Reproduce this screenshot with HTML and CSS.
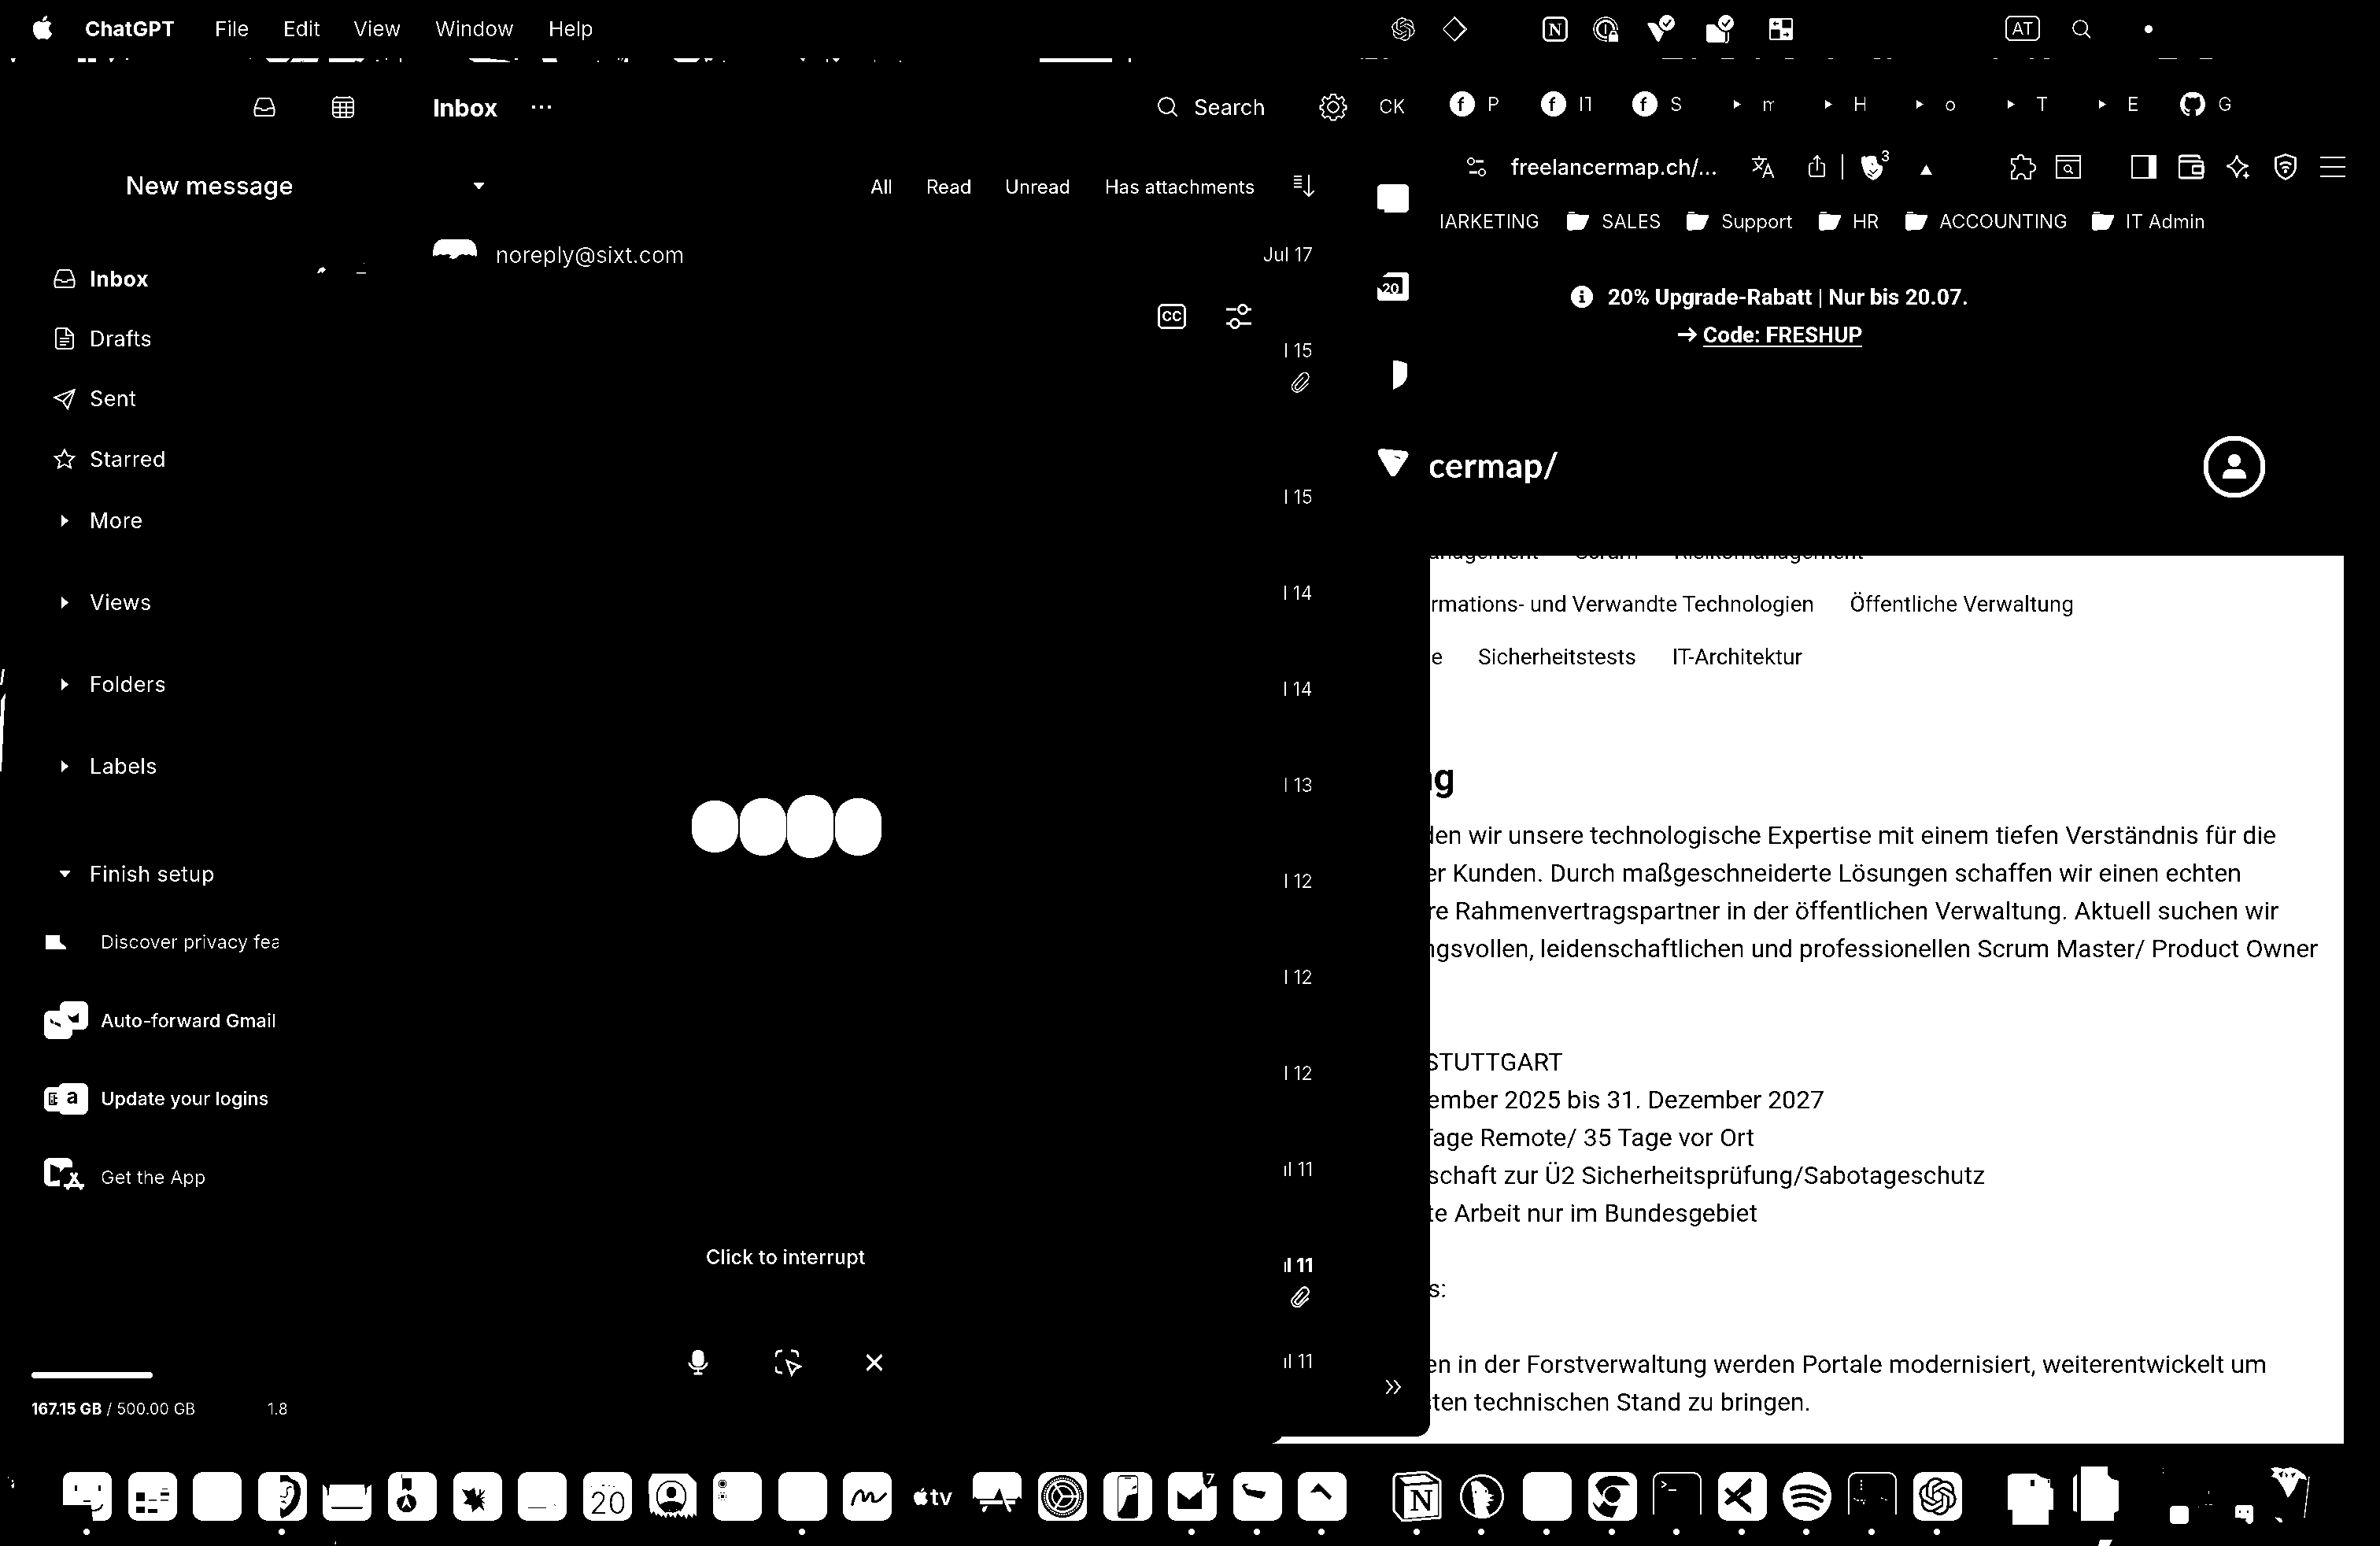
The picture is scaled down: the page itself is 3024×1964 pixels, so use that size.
FILE: index.html
```html
<!DOCTYPE html>
<html lang="en">
<head>
<meta charset="utf-8">
<title>Desktop</title>
<link rel="stylesheet" href="styles.css">
</head>
<body>
<svg class="defs" width="0" height="0">
  <symbol id="openai" viewBox="0 0 24 24"><path d="M22.2819 9.8211a5.9847 5.9847 0 0 0-.5157-4.9108 6.0462 6.0462 0 0 0-6.5098-2.9A6.0651 6.0651 0 0 0 4.9807 4.1818a5.9847 5.9847 0 0 0-3.9977 2.9 6.0462 6.0462 0 0 0 .7427 7.0966 5.98 5.98 0 0 0 .511 4.9107 6.051 6.051 0 0 0 6.5146 2.9001A5.9847 5.9847 0 0 0 13.2599 24a6.0557 6.0557 0 0 0 5.7718-4.2058 5.9894 5.9894 0 0 0 3.9977-2.9001 6.0557 6.0557 0 0 0-.7475-7.0729zm-9.022 12.6081a4.4755 4.4755 0 0 1-2.8764-1.0408l.1419-.0804 4.7783-2.7582a.7948.7948 0 0 0 .3927-.6813v-6.7369l2.02 1.1686a.071.071 0 0 1 .038.052v5.5826a4.504 4.504 0 0 1-4.4945 4.4944zm-9.6607-4.1254a4.4708 4.4708 0 0 1-.5346-3.0137l.142.0852 4.783 2.7582a.7712.7712 0 0 0 .7806 0l5.8428-3.3685v2.3324a.0804.0804 0 0 1-.0332.0615L9.74 19.9502a4.4992 4.4992 0 0 1-6.1408-1.6464zM2.3408 7.8956a4.485 4.485 0 0 1 2.3655-1.9728V11.6a.7664.7664 0 0 0 .3879.6765l5.8144 3.3543-2.0201 1.1685a.0757.0757 0 0 1-.071 0l-4.8303-2.7865A4.504 4.504 0 0 1 2.3408 7.872zm16.5963 3.8558L13.1038 8.364 15.1192 7.2a.0757.0757 0 0 1 .071 0l4.8303 2.7913a4.4944 4.4944 0 0 1-.6765 8.1042v-5.6772a.79.79 0 0 0-.407-.667zm2.0107-3.0231l-.142-.0852-4.7735-2.7818a.7759.7759 0 0 0-.7854 0L9.409 9.2297V6.8974a.0662.0662 0 0 1 .0284-.0615l4.8303-2.7866a4.4992 4.4992 0 0 1 6.6802 4.66zM8.3065 12.863l-2.02-1.1638a.0804.0804 0 0 1-.038-.0567V6.0742a4.4992 4.4992 0 0 1 7.3757-3.4537l-.142.0805L8.704 5.459a.7948.7948 0 0 0-.3927.6813zm1.0976-2.3654l2.602-1.4998 2.6069 1.4998v2.9994l-2.5974 1.4997-2.6067-1.4997Z"/></symbol>
  <symbol id="apple" viewBox="0 0 24 24"><path d="M12.152 6.896c-.948 0-2.415-1.078-3.96-1.04-2.04.027-3.91 1.183-4.961 3.014-2.117 3.675-.546 9.103 1.519 12.09 1.013 1.454 2.208 3.09 3.792 3.039 1.52-.065 2.09-.987 3.935-.987 1.831 0 2.35.987 3.96.948 1.637-.026 2.676-1.48 3.676-2.948 1.156-1.688 1.636-3.325 1.662-3.415-.039-.013-3.182-1.221-3.22-4.857-.026-3.04 2.48-4.494 2.597-4.559-1.429-2.09-3.623-2.324-4.39-2.376-2-.156-3.675 1.09-4.61 1.09zM15.53 3.83c.843-1.012 1.4-2.427 1.245-3.83-1.207.052-2.662.805-3.532 1.818-.78.896-1.454 2.338-1.273 3.714 1.338.104 2.715-.688 3.559-1.701"/></symbol>
  <symbol id="inbox" viewBox="0 0 28 24"><path class="ln" d="M1.500 13.500 6 2.200Q6.500 1.200 7.600 1.200H20.400Q21.500 1.200 22 2.200L26.500 13.500V20.500Q26.500 22.800 24.200 22.800H3.800Q1.500 22.800 1.500 20.500ZM1.500 13.500H8.500Q10 13.500 10.500 15 11 16.500 14 16.500T17.500 15Q18 13.500 19.500 13.500H26.500"/></symbol>
  <symbol id="clip" viewBox="0 0 28 30"><path d="M25.500 16.500 15.500 26A7 7 0 0 1 4.500 17.500L16 4.500A5.400 5.400 0 0 1 24.500 11.500L13.500 23.500A3 3 0 0 1 8.500 19.500L18.500 8.500"/></symbol>
  <symbol id="caret" viewBox="0 0 8 12" preserveAspectRatio="none"><path d="M0 0 8 6 0 12Z"/></symbol>
  <symbol id="folder" viewBox="0 0 29 24"><path d="M2 0H10V2H2ZM0 5Q0 3 2 3H14L15 4H28V7L22 20Q20 24 14 22.500L4 24Q0 24 0 20Z"/></symbol>
  <symbol id="glass" viewBox="0 0 26 26"><circle class="ln" cx="11" cy="11" r="9.800"/><path class="ln" d="M18 18 25 25"/></symbol>
  <symbol id="fmap" viewBox="0 0 32 32"><circle cx="16" cy="16" r="16"/><path class="bk" d="M12 25V15H10V13H12Q12 7 18 7V10Q15 10 15 13H18V15H15V25Z"/></symbol>
  <symbol id="tune" viewBox="0 0 32 32"><path class="ln3" d="M0 7H13M27 7H32M0 25H5M18 25H32"/><circle class="ln3" cx="21" cy="7" r="5.500"/><circle class="ln3" cx="11" cy="25" r="5.500"/></symbol>
  <symbol id="check" viewBox="0 0 20 20"><circle cx="10" cy="10" r="10"/><path d="M5 10 9 14 15 6" fill="none" stroke="#000" stroke-width="2.600"/></symbol>
</svg>
<div class="desktop">
  <header class="menubar">
    <svg class="apple"><use href="#apple"/></svg><b>ChatGPT</b><span>File</span><span>Edit</span><span>View</span><span>Window</span><span>Help</span>
    <svg class="i30 dim"><use href="#openai"/></svg>
    <svg class="i32" viewBox="0 0 32 32"><path class="ln1" d="M16 1 2 16 16 31 32 16ZM16 1 29 16 16 31"/></svg>
    <svg class="i32" viewBox="0 0 32 32"><rect class="ln3" x="1.500" y="1.500" width="29" height="29" rx="6"/><text class="serif" x="16" y="24" font-size="23" text-anchor="middle">N</text></svg>
    <svg class="i32" viewBox="0 0 32 32"><circle class="ln1" cx="16" cy="16" r="15"/><circle class="ln3" cx="16" cy="16" r="10.500"/><path class="ln3" d="M16 10V22"/><path class="bk" d="M18 17H32V32H18Z"/><rect x="20" y="23" width="12" height="9" rx="1"/><path class="ln" d="M22.500 23V21Q22.500 19 26 19T29.500 21V23"/></svg>
    <svg class="i36" viewBox="0 0 36 36"><path d="M0 11Q7 7 13 13L20 18 14 33Q12 33 11 31Z"/><path class="ln" d="M14 34 21 20"/><circle class="bk" cx="25" cy="10" r="12"/><use href="#check" x="15" y="0" width="20" height="20"/></svg>
    <svg class="i36" viewBox="0 0 36 36"><path d="M0 14Q0 12 2 12H10L14 16H24V33Q24 35 22 35H4Q0 35 0 31Z"/><path class="ln" d="M24 35Q28 35 28 31V22"/><circle class="bk" cx="25" cy="10" r="12"/><use href="#check" x="15" y="0" width="20" height="20"/></svg>
    <svg class="i30" viewBox="0 0 30 30"><path d="M3 1H27Q30 1 30 4V26Q30 29 27 29H3Q0 29 0 26V4Q0 1 3 1Z"/><path class="bk" d="M16.500 3H28V13.500H16.500ZM2 15.500H13.500V27H2ZM4 8 8 4.500V7H12V9H8V11.500ZM26 22 22 18.500V21H18V23H22V25.500Z"/></svg>
    <span class="lang">AT</span>
    <svg class="i24"><use href="#glass"/></svg>
    <i class="recdot"></i>
  </header>
  <svg class="strip" viewBox="0 0 3024 6"><path d="M14 0H20L18 5H15ZM99 0H109V5H99ZM112 0H122V5H112ZM139 0H145L142 5H140ZM160 0H163V2H160ZM317 0H319V1H317ZM337 0H368L364 5H343ZM372 0H405L403 5H383L390 2 380 5H369ZM418 0H463L458 5 452 3 450 5H418ZM478 2H481V4H478ZM490 0H492V2H490ZM508 0H510V5H508ZM595 0H622L628 3 622 1 640 2 650 5H603ZM654 0H658V2H654ZM689 0H707L708 5H690ZM759 3H761V5H759ZM785 0H787V2H785ZM790 0 792 0 789 4ZM794 0H798V5H793ZM855 0H889L885 5H862ZM895 0H906L903 3 900 2 897 5ZM919 3H921V5H919ZM1016 0H1023L1021 4ZM1050 1H1052V5H1050ZM1058 0H1067L1062 5ZM1111 2H1112V5H1111ZM1143 3H1145V5H1143ZM1321 0H1413V5H1321ZM1434 0H1437V5H1434ZM1729 0H1732V1H1729ZM1735 0H1750V1H1735ZM1758 0H1763V1H1758ZM2112 0H2138V1H2112ZM2150 0H2155V1H2150ZM2187 0H2203V1H2187ZM2231 0H2236V1H2231ZM2268 0H2279V1H2268ZM2323 0H2329V1H2323ZM2381 0H2389V1H2381ZM2398 0H2403V1H2398ZM2533 0H2538V1H2533ZM2579 0H2584V1H2579ZM2597 0H2604V1H2597ZM2743 0H2766V1H2743ZM2795 0H2811V1H2795Z"/></svg>

  <main class="stage">
    <section class="browser">
      <div class="tabs">
        <svg class="i32"><use href="#fmap"/></svg><span>P</span><svg class="i32"><use href="#fmap"/></svg><span>IT</span><svg class="i32"><use href="#fmap"/></svg><span>S</span>
        <svg class="play"><use href="#caret"/></svg><span>m</span><svg class="play"><use href="#caret"/></svg><span>H</span><svg class="play"><use href="#caret"/></svg><span>o</span><svg class="play"><use href="#caret"/></svg><span>T</span><svg class="play"><use href="#caret"/></svg><span>E</span>
        <svg class="i32" viewBox="0 0 24 24"><path d="M12 .297c-6.630 0-12 5.373-12 12 0 5.303 3.438 9.800 8.205 11.385.6.113.82-.258.82-.577 0-.285-.01-1.040-.015-2.040-3.338.724-4.042-1.610-4.042-1.610C4.422 18.070 3.633 17.700 3.633 17.700c-1.087-.744.084-.729.084-.729 1.205.084 1.838 1.236 1.838 1.236 1.070 1.835 2.809 1.305 3.495.998.108-.776.417-1.305.76-1.605-2.665-.3-5.466-1.332-5.466-5.930 0-1.310.465-2.380 1.235-3.220-.135-.303-.54-1.523.105-3.176 0 0 1.005-.322 3.300 1.230.96-.267 1.980-.399 3-.405 1.020.006 2.040.138 3 .405 2.280-1.552 3.285-1.230 3.285-1.230.645 1.653.24 2.873.12 3.176.765.840 1.230 1.910 1.230 3.220 0 4.610-2.805 5.625-5.475 5.920.42.360.81 1.096.81 2.220 0 1.606-.015 2.896-.015 3.286 0 .315.21.690.825.570C20.565 22.092 24 17.592 24 12.297c0-6.627-5.373-12-12-12"/></svg><span>G</span>
      </div>
      <div class="urlbar">
        <svg class="i24" viewBox="0 0 24 24"><path class="ln3" d="M11 5H21M3 19H13"/><circle class="ln" cx="5" cy="5" r="4"/><circle class="ln" cx="19" cy="19" r="4"/></svg>
        <span>freelancermap.ch/...</span>
        <svg class="i30" viewBox="0 0 30 30"><path class="ln" d="M1 5H20M10 1V5M16 5Q13 15 2 20M5 8Q8 15 14 18M15 29 21.500 12 28.500 29M17 23H26"/></svg>
        <svg class="i30" viewBox="0 0 30 32"><path class="ln" d="M7 11H4Q1.500 11 1.500 14V26Q1.500 29 4 29H19Q21.500 29 21.500 26V14Q21.500 11 19 11H16M11.500 21V1M7 6 11.500 1 16 6"/></svg>
        <i class="rule"></i>
        <span class="brave"><svg class="i36" viewBox="0 0 36 36"><path d="M0 6 4 4 6 6 10 4Q14 3 19 5L20 13 22 15 27 17 27 22Q25 31 15 35 6 31 3 23L0 12Z"/><path class="bkl" d="M13 14 15 15M10 22 15 26 21 21M8 27 14 30"/></svg><sup>3</sup></span>
        <svg class="tri" viewBox="0 0 15 13"><path d="M7.500 0 15 13H0Z"/></svg>
        <svg class="i34" viewBox="0 0 34 34"><path class="ln" d="M3 7H11Q10 2 14.500 2T18 7H27V13Q33 13 33 18T27 23V32H20Q20 26 15 26T10 32H3V23Q7 22 7 18T3 13Z"/></svg>
        <svg class="i32" viewBox="0 0 32 32"><rect class="ln" x="1" y="2" width="30" height="28"/><path class="ln" d="M1 8H31"/><circle class="ln" cx="15" cy="18" r="4"/><path class="ln" d="M18 21 22 25"/></svg>
        <svg class="i32" viewBox="0 0 32 32"><rect class="ln" x="1" y="2" width="30" height="28"/><path d="M22 2H32V30H22Z"/></svg>
        <svg class="i34" viewBox="0 0 34 32"><path class="ln3" d="M2 6V28Q2 30 4 30H30Q32 30 32 28V11Q32 9 29 9H4Q2 9 2 6T4 2H26Q28 3 28 6"/><rect class="ln3" x="19" y="15" width="13" height="9" rx="1"/></svg>
        <svg class="i32" viewBox="0 0 32 32"><path class="ln" d="M14 1Q16 13 29 15 16 17 14 30 12 17 1 15 12 13 14 1Z"/><path d="M26 21 28 26 32 27 28 28 26 32 24 28 20 27 24 26Z"/></svg>
        <svg class="i34 shield" viewBox="0 0 30 36"><path class="ln3" d="M15 1.500 28.500 6V17Q28 29 15 34.500 2 29 1.500 17V6ZM7 15Q15 9 23 15M10.500 20Q15 16 19.500 20"/><circle cx="15" cy="24" r="2.500"/></svg>
        <svg class="i32" viewBox="0 0 32 32"><path class="ln" d="M0 4H32M0 16H32M0 28H32"/></svg>
      </div>
      <div class="bookmarks">
        <span class="cut"><em>MARKETING</em></span>
        <svg><use href="#folder"/></svg><span>SALES</span><svg><use href="#folder"/></svg><span>Support</span><svg><use href="#folder"/></svg><span>HR</span><svg><use href="#folder"/></svg><span>ACCOUNTING</span><svg><use href="#folder"/></svg><span>IT Admin</span>
      </div>
      <div class="banner">
        <p><svg viewBox="0 0 28 28"><circle cx="14" cy="14" r="14"/><path class="bk" d="M12 6H16V10H12ZM11 12H16V19H18V21.500H10.500V19H12.500V14.500H11Z"/></svg>20% Upgrade-Rabatt | Nur bis 20.07.</p>
        <p><svg class="arrow" viewBox="0 0 25 20"><path d="M0 10H22M14 2 22 10 14 18" fill="none" stroke="#fff" stroke-width="4"/></svg><u>Code: FRESHUP</u></p>
      </div>
      <div class="brand">
        <span>cermap/</span>
        <svg viewBox="0 0 80 80"><circle cx="40" cy="40" r="36.500" fill="none" stroke="#fff" stroke-width="6"/><circle cx="40" cy="32" r="8"/><path d="M25 55Q25 43 34 43H46Q55 43 55 55Z"/></svg>
      </div>
      <article class="doc">
        <div class="tags"><span class="t1">management</span><span class="t2">Scrum</span><span class="t3">Risikomanagement</span></div>
        <div class="tags"><span class="t4">Informations- und Verwandte Technologien</span><span class="t5">Öffentliche Verwaltung</span></div>
        <div class="tags"><span class="t6">e</span><span class="t7">Sicherheitstests</span><span class="t8">IT-Architektur</span></div>
        <h2>ng</h2>
        <p class="w1">nden wir unsere technologische Expertise mit einem tiefen Verständnis für die</p>
        <p class="w2">er Kunden. Durch maßgeschneiderte Lösungen schaffen wir einen echten</p>
        <p class="w3">re Rahmenvertragspartner in der öffentlichen Verwaltung. Aktuell suchen wir</p>
        <p class="w4">ngsvollen, leidenschaftlichen und professionellen Scrum Master/ Product Owner</p>
        <p></p><p></p>
        <p class="w5">STUTTGART</p>
        <p class="w6">ember 2025 bis 31. Dezember 2027</p>
        <p class="w7">Tage Remote/ 35 Tage vor Ort</p>
        <p class="w8">schaft zur Ü2 Sicherheitsprüfung/Sabotageschutz</p>
        <p class="w9">te Arbeit nur im Bundesgebiet</p>
        <p></p>
        <p class="w10">s:</p>
        <p></p>
        <p class="w11">en in der Forstverwaltung werden Portale modernisiert, weiterentwickelt um</p>
        <p class="w12">sten technischen Stand zu bringen.</p>
      </article>
    </section>

    <section class="mail">
      <div class="mailmain">
        <div class="topbar">
          <svg class="inb"><use href="#inbox"/></svg>
          <svg class="i28" viewBox="0 0 28 28"><rect class="ln" x="1" y="2" width="26" height="25" rx="5"/><path class="ln" d="M1 8H27M1 14.500H27M1 21H27M10 8V27M18 8V27M6 0V2M22 0V2"/></svg>
          <h1>Inbox</h1>
          <svg class="i24" viewBox="0 0 24 4"><path d="M0 0H4V4H0ZM10 0H14V4H10ZM20 0H24V4H20Z"/></svg>
          <svg class="i26"><use href="#glass"/></svg>
          <span>Search</span>
          <svg class="i36" viewBox="0 0 36 36"><path class="ln" d="M15 2H21L22 6.500 25 8 29 5 32 9 30 13 31 15.500 34.500 16.500V20.500L31 21.500 30 24 32 28 28.500 31.500 25 29.500 22 31 21 34.500H15L14 31 11 29.500 7.500 31.500 4 28 6 24 5 21.500 1.500 20.500V16.500L5 15.500 6 13 4 9 7 5 11 8 14 6.500Z"/><circle class="ln" cx="18" cy="18" r="6.800"/></svg>
        </div>
        <div class="filterbar">
          <b>New message</b>
          <svg class="drop" viewBox="0 0 14 8"><path d="M0 0H14L7 8Z"/></svg>
          <span>All</span><span>Read</span><span>Unread</span><span>Has attachments</span>
          <svg class="i28" viewBox="0 0 28 28"><path class="ln" d="M0 2H10M0 6.500H10M0 11H10M0 15.500H10M19 0V26M12.500 20 19 27 25.500 20"/></svg>
        </div>
        <div class="cols">
          <nav class="side">
            <div class="item"><svg class="inb"><use href="#inbox"/></svg><b>Inbox</b></div>
            <div class="item"><svg class="i28" viewBox="0 0 28 28"><path class="ln" d="M3 4Q3 1 6 1H17L25 9V24Q25 27 22 27H6Q3 27 3 24ZM16 1V10H25M8 14H20M8 18H20M8 22H16"/></svg>Drafts</div>
            <div class="item"><svg class="i28" viewBox="0 0 28 28"><path class="ln" d="M1 12 27 2 18 26 12 17ZM12 17 27 2"/></svg>Sent</div>
            <div class="item"><svg class="i28" viewBox="0 0 28 28"><path class="ln" d="M14 2 17.700 10 26.500 11 20 17 22 25.500 14 21 6 25.500 8 17 1.500 11 10.300 10Z"/></svg>Starred</div>
            <div class="sec"><svg class="tw"><use href="#caret"/></svg>More</div>
            <div class="sec"><svg class="tw"><use href="#caret"/></svg>Views</div>
            <div class="sec"><svg class="tw"><use href="#caret"/></svg>Folders</div>
            <div class="sec"><svg class="tw"><use href="#caret"/></svg>Labels</div>
            <div class="sec finish"><svg class="drop" viewBox="0 0 14 8"><path d="M0 0H14L7 8Z"/></svg>Finish setup</div>
            <div class="task thin"><svg viewBox="0 0 56 48"><path d="M2 15H20V24L28 30V33H2Z"/></svg><span class="fade">Discover privacy features</span></div>
            <div class="task"><svg viewBox="0 0 56 48"><rect x="0" y="12" width="36" height="36" rx="8"/><rect x="20" y="0" width="36" height="36" rx="8"/><path class="bk" d="M8 22 12 25V29L8 27ZM14 26 21 29V33L13 29ZM30 17Q36 24 44 14V27H37Q31 24 30 17Z"/></svg><span>Auto-forward Gmail</span></div>
            <div class="task"><svg viewBox="0 0 56 48"><rect x="0" y="9" width="34" height="31" rx="7"/><rect x="18" y="4" width="38" height="40" rx="8"/><path d="M16 17H7V31H16M10 21V22M10 25V29M13 19V29H17M12 23H17" fill="none" stroke="#000" stroke-width="1.800"/><text class="bk" x="36" y="30" font-size="26" font-weight="700" text-anchor="middle">a</text></svg><span>Update your logins</span></div>
            <div class="task thin"><svg viewBox="0 0 56 48"><path d="M8 0H28Q36 0 36 8V12H26L20 18V36H8Q0 36 0 28V8Q0 0 8 0Z"/><path class="bk" d="M8 8 20 13V28L8 30Z"/><path d="M25 35H51M34 19 48 40M42 19 29 40" fill="none" stroke="#fff" stroke-width="4"/></svg><span>Get the App</span></div>
            <div class="meter"></div>
            <div class="quota"><span><b>167.15 GB</b> / 500.00 GB</span><span class="ver">1.8</span></div>
          </nav>
          <div class="list">
            <div class="row"><svg class="avatar" viewBox="0 0 56 26"><path d="M0 19Q0 0 14 0H42Q56 0 56 19L55 23 53 20 50 21 46 19 42 20 38 19 33 20 30 24 25 25 20 23 24 20 18 19 14 20 9 19 5 21 2 20 1 23Z"/></svg><span class="from">noreply@sixt.com</span><time>Jul 17</time></div>
            <div class="row tall"><time>Jul 15</time><svg class="clip"><use href="#clip"/></svg></div>
            <div class="row"><time>Jul 15</time></div>
            <div class="row"><time>Jul 14</time></div>
            <div class="row"><time>Jul 14</time></div>
            <div class="row"><time>Jul 13</time></div>
            <div class="row"><time>Jul 12</time></div>
            <div class="row"><time>Jul 12</time></div>
            <div class="row"><time>Jul 12</time></div>
            <div class="row"><time>Jul 11</time></div>
            <div class="row bold"><time>Jul 11</time><svg class="clip"><use href="#clip"/></svg></div>
            <div class="row"><time>Jul 11</time></div>
          </div>
        </div>
      </div>
      <aside class="rail">
        <span>CK</span>
        <svg viewBox="0 0 40 36"><path d="M6 0H34Q40 0 40 6V30Q40 36 34 36H9V32H4Q0 32 0 29V6Q0 0 6 0Z"/></svg>
        <svg viewBox="0 0 40 36"><path d="M14 0H36Q40 0 40 4V32Q40 36 36 36H4Q0 36 0 32V19L4 21 10 26 32 27V8Q32 6 30 6H6Z"/><path class="bk" d="M4 12H32V27H8L4 21Z"/><text x="17" y="27" font-size="17" font-weight="700" text-anchor="middle">20</text></svg>
        <svg viewBox="0 0 40 36"><path d="M20 0Q30 0 38 4V18Q38 30 20 37Z"/></svg>
        <svg viewBox="0 0 40 36"><path d="M5 0 36 3Q41 5 39 10L24 33Q20 38 16 33L1 7Q-1 2 5 0Z"/><path class="bk" d="M21 9 29 11V13L23 11Z"/></svg>
        <svg class="more" viewBox="0 0 20 20"><path class="ln" d="M1 1 9 10 1 19M11 1 19 10 11 19"/></svg>
      </aside>
    </section>

    <section class="voice">
      <div class="vtop">
        <svg class="i36" viewBox="0 0 36 32"><rect class="ln3" x="1.500" y="1.500" width="33" height="29" rx="5"/><text x="18" y="22" font-size="17" font-weight="700" text-anchor="middle">CC</text></svg>
        <svg class="i32"><use href="#tune"/></svg>
      </div>
      <div class="blobs"><i class="b1"></i><i class="b2"></i><i class="b3"></i><i class="b2"></i></div>
      <p>Click to interrupt</p>
      <div class="controls">
        <svg class="mic" viewBox="0 0 26 32"><rect x="5.500" y="0" width="15" height="21" rx="6.500"/><path class="ln3" d="M1.500 16Q3 24 13 24T24.500 16M13 24V30M7.500 30H18.500"/></svg>
        <svg class="i36" viewBox="0 0 36 34"><path class="ln3" d="M10 2H8Q2 2 2 8V10M21 2H24Q30 2 30 8V10M2 22V25Q2 30 8 30H10"/><path class="ln3" d="M16 15 33 22 26 25 22 32Z"/></svg>
        <svg class="close" viewBox="0 0 22 22"><path d="M1.500 1.500 20.500 20.500M20.500 1.500 1.500 20.500" stroke="#fff" stroke-width="4"/></svg>
      </div>
    </section>
    <svg class="specks" viewBox="0 0 480 1000"><path d="M403 267Q405 260 411 259L414 263 409 267 408 264 406 267ZM453 266H465V267.500H453ZM462 254H463V255H462ZM3 770H6L3 790H0ZM1 810 7 800 5 830 2 900H0V850Z"/></svg>
  </main>

  <footer class="dock">
    <svg class="edge" viewBox="0 0 20 30"><path d="M0 0H1V2H0ZM5 4H7V7H5ZM4 11 8 8V13L6 15Z"/></svg>
    <div class="group">
      <span class="on"><svg viewBox="0 0 62 62"><path d="M12 0H50Q62 0 62 12V50Q62 62 50 62H38L36 42H0V12Q0 0 12 0Z"/><path class="bk" d="M15 17H18V24H15ZM45 17H48V24H45ZM26 36H35V38H26ZM35 42V50Q50 51 51 41H49Q47 48 36 48Z"/></svg></span>
      <span><svg viewBox="0 0 62 62"><rect width="62" height="62" rx="13"/><path class="bk" d="M10 26H21V37H10ZM10 44H21V52H10ZM25 47H37V52H25ZM41 26H52V30H41ZM26 35H36V36.500H26ZM41 35H51V36.500H41ZM43 21H50V22H43Z"/></svg></span>
      <span><svg viewBox="0 0 62 62"><rect width="62" height="62" rx="13"/></svg></span>
      <span class="on"><svg viewBox="0 0 62 62"><rect width="62" height="62" rx="13"/><path class="bk" d="M28 4H38L42 9Q54 11 54 25 53 48 34 57L30 59 28 55V45L33 48 41 40 46 28 45 17Q42 12 34 12L28 13ZM28 38 33 36 38 41 33 39Z"/><path class="bkl" d="M36 22Q40 17 43 20M36 22Q39 30 34 32L28 31"/></svg></span>
      <span><svg viewBox="0 0 62 62"><path d="M0 16 5 20 7 33 9 16H53L55 33 56 20 62 16V50Q62 62 50 62H12Q0 62 0 50Z"/><path class="bk" d="M10 44.500H52L50 47H12Z"/></svg></span>
      <span><svg viewBox="0 0 62 62"><rect width="62" height="62" rx="13"/><path class="bk" d="M17 3H18V8H30V22L26 24 22 21 18 23V8H17ZM22 30 26 28 34 32 36 38Q36 48 27 51H20Q11 46 11 38L13 33Z"/><path d="M23 29 30 47 24 41 17 47Z"/></svg></span>
      <span><svg viewBox="0 0 62 62"><rect width="62" height="62" rx="13"/><path class="bk" d="M11 22 20 24 27 20 29 31 38 25 34 33 43 31 35 35 41 40 36 39 40 50 33 44 24 51 23 42 12 40 18 34Z"/><path class="bkl" d="M34 22V29M40 23 35 30"/></svg></span>
      <span><svg viewBox="0 0 62 62"><rect width="62" height="62" rx="13"/><path class="bk" d="M13 45H36V46H13ZM45 40 48 42V43.500Z"/></svg></span>
      <span><svg viewBox="0 0 62 62"><rect width="62" height="62" rx="13"/><path class="bk" d="M10 18H11V19H10ZM24 16H27V18H24ZM32 17H34V18H32ZM38 18H40V19H38Z"/><text class="bk" x="31.500" y="53" font-size="38" font-weight="300" text-anchor="middle">20</text></svg></span>
      <span><svg viewBox="0 0 62 62"><path d="M6 2H50Q58 8 62 14V57L58 52 57 59 52 53 49 60 46 54 43 57 38 52 35 59 32 54 29 58 26 52 23 59 20 54 17 57 13 52 11 56 8 50 4 53 2 44 1 12Z"/><ellipse cx="30" cy="31" rx="18.500" ry="19.500" fill="none" stroke="#000" stroke-width="2"/><ellipse class="bk" cx="30" cy="26" rx="6.500" ry="7.500"/><path class="bk" d="M14 43Q20 37 30 37T46 43L42 50 36 47 32 52 28 48 22 52Z"/></svg></span>
      <span><svg viewBox="0 0 62 62"><rect width="62" height="62" rx="13"/><circle class="bk" cx="12" cy="15" r="3"/><circle class="bk" cx="12" cy="31" r="2.500"/><circle cx="12" cy="15" r="5" fill="none" stroke="#000"/><circle cx="12" cy="31" r="5" fill="none" stroke="#000" stroke-dasharray="2 2"/></svg></span>
      <span class="on"><svg viewBox="0 0 62 62"><rect width="62" height="62" rx="13"/></svg></span>
      <span><svg viewBox="0 0 62 62"><rect width="62" height="62" rx="13"/><path d="M12 41Q16 24 23 24 27 25 26 36 29 38 33 28 39 24 38 37 44 40 54 28" fill="none" stroke="#000" stroke-width="3.500" stroke-linecap="round"/></svg></span>
      <span class="tv"><svg><use href="#apple"/></svg>tv</span>
      <span><svg viewBox="0 0 62 62"><path d="M12 0H50Q62 0 62 12V34L58 31 56 34H42L45 41 49 48Q49 52 45 50L41 41 34 20 27 34H5L3 31 0 34V12Q0 0 12 0ZM9 36H38V41H9ZM42 36H54V41H42ZM13 44 19 43 16 50Q12 52 12 48Z"/></svg></span>
      <span><svg viewBox="0 0 62 62"><rect width="62" height="62" rx="13"/><circle class="bk" cx="31" cy="31" r="27"/><circle cx="31" cy="31" r="23" fill="none" stroke="#fff" stroke-width="2" stroke-dasharray="2 1"/><circle cx="31" cy="31" r="19.500" fill="none" stroke="#fff" stroke-width="3"/><circle cx="31" cy="31" r="13" fill="none" stroke="#fff" stroke-width="2"/><path d="M31 31 50 31M31 31 21 15M31 31 21 47" stroke="#fff" stroke-width="3"/></svg></span>
      <span><svg viewBox="0 0 62 62"><rect width="62" height="62" rx="13"/><rect x="18.500" y="5" width="25" height="53" rx="4" fill="none" stroke="#000" stroke-width="1.500"/><path class="bk" d="M27 7H35V8.500H27ZM43 27V58H19V52Q27 44 30 30ZM36 22Q37 18 42 17V20Z"/></svg></span>
      <span class="on"><svg viewBox="0 0 62 62"><path d="M12 0H44L45 14 50 21 55 18H62V50Q62 62 50 62H12Q0 62 0 50V12Q0 0 12 0Z"/><path class="bk" d="M12 24 27 35 43 22V47H15Q12 47 12 44Z"/><text x="54" y="15" font-size="18" font-weight="700" text-anchor="middle">7</text></svg></span>
      <span class="on"><svg viewBox="0 0 62 62"><rect width="62" height="62" rx="13"/><path class="bk" d="M11 18Q12 13 20 15L15 18 18 22 41 25 40 30 36 34 17 29Z"/></svg></span>
      <span class="on"><svg viewBox="0 0 62 62"><rect width="62" height="62" rx="13"/><path class="bk" d="M26 14 43 31 40 36 30 25 16 26Z"/></svg></span>
    </div>
    <div class="group">
      <span class="on"><svg viewBox="0 0 62 62"><path d="M4 3 42 0 60 11V58L12 62 1 49V7Z" fill="#000" stroke="#fff" stroke-width="3" stroke-linejoin="round"/><path d="M8 7 40 4 52 12 16 15ZM14 18 57 15V55L14 59Z"/><text class="bk thinserif" x="36" y="49" font-size="40" text-anchor="middle">N</text></svg></span>
      <span class="on"><svg viewBox="0 0 62 62"><circle cx="31" cy="31" r="26.500" fill="none" stroke="#fff" stroke-width="3"/><path d="M17 13Q27 8 33 18 40 21 39 28L47 29 40 33 47 36 37 38 42 42 36 44 42 57Q31 61 23 56L20 36Z"/><path class="bk" d="M22 24H24V27H22ZM35 23H37V26H35Z"/></svg></span>
      <span class="on"><svg viewBox="0 0 62 62"><rect width="62" height="62" rx="13"/></svg></span>
      <span class="on"><svg viewBox="0 0 62 62"><rect width="62" height="62" rx="13"/><circle class="bk" cx="31" cy="29" r="10"/><path class="bk" d="M9 17Q15 5 31 5 47 5 53 17H31Q18 19 18 32ZM5 37 13 45Q18 41 20 36 24 45 38 43L31 58Q10 56 5 37Z"/></svg></span>
      <span class="on"><svg viewBox="0 0 62 62"><path class="ln" d="M1 54V12Q1 1 12 1H50Q61 1 61 12V54M11 12 17 15.500 11 20M20 23H30"/></svg></span>
      <span class="on"><svg viewBox="0 0 62 62"><rect width="62" height="62" rx="13"/><path class="bk" d="M42 9V25L12 42 8 38 22 32 8 24 12 20 42 45V53L22 35Z"/><path d="M42 9 10 40M10 22 40 50" stroke="#000" stroke-width="5"/></svg></span>
      <span class="on"><svg viewBox="0 0 64 64"><circle cx="32" cy="32" r="32"/><path d="M12 22Q34 14 55 28M14 33Q34 26 51 38M16 44Q33 38 46 48" fill="none" stroke="#000" stroke-width="5.500" stroke-linecap="round"/></svg></span>
      <span class="on"><svg viewBox="0 0 62 62"><path class="ln" d="M1 54V12Q1 1 12 1H50Q61 1 61 12V54"/><path class="ln1" stroke-dasharray="3 2" d="M17 10V24M7 33 12 36H22M20 38V43M42 33 50 36"/></svg></span>
      <span class="on"><svg viewBox="0 0 62 62"><rect width="62" height="62" rx="13"/><use class="bk" href="#openai" x="7" y="7" width="48" height="48"/></svg></span>
    </div>
    <div class="group">
      <span><svg viewBox="0 0 62 62"><path d="M6 2H36L42 6 50 9H54V20L58 21V48H52V67H6V48H0V5Z"/><path class="bk" d="M29 10H34V18H29ZM51 10H53V14H51Z"/></svg></span>
      <span class="up"><svg viewBox="0 0 62 70"><path d="M10 0H44V10L50 16 58 18V56L52 59V69H10ZM0 14 5 10V58L0 56Z"/></svg></span>
      <span><svg viewBox="0 0 62 62"><path d="M32-5H33V-4H32ZM32 0H33V2H32Z"/><rect x="41" y="43" width="24" height="23" rx="5"/></svg></span>
      <span><svg viewBox="0 0 62 62"><path d="M-6 44H-5V45H-6ZM3 41H5V42H3ZM8 41H12V42H8ZM7 24H8V28H7Z"/><path d="M46 42H60Q64 42 64 46V60Q64 66 58 66L54 62 55 59 41 58V46Q41 42 46 42Z"/><path class="bk" d="M46 49H48V52H46ZM56 49H58V52H56Z"/></svg></span>
      <span><svg viewBox="0 0 62 62"><path d="M4-5 12-6 20-4 30-6 38-3 48 4 50 10 40 8 34 22 26 33 20 20 12 8 5 6 9 0Z"/><path class="bk" d="M14 2 20-1 18 8ZM30 2 36 1 32 8ZM22 0 26 4 24 8Z"/><path class="ln1" d="M53 6 47 58"/><path d="M9 57 18 59 19 64H15Z"/></svg></span>
    </div>
    <svg class="foot" viewBox="0 0 3024 8"><path d="M425 5 427 1V6ZM2668 0H2684L2680 8H2666Z"/></svg>
  </footer>
</div>
</body>
</html>
```
FILE: styles.css
```css
* { box-sizing: border-box; margin: 0; padding: 0; }
html, body { background: #000; }
body { width: 3024px; height: 1964px; overflow: hidden; font-family: Inter, sans-serif; color: #fff; }
svg { fill: #fff; display: block; overflow: visible; flex: none; }
.defs { position: absolute; }
.desktop { width: 3024px; height: 1964px; display: flex; flex-direction: column; background: #000; filter: contrast(40); overflow: hidden; }
span, b, h1, time, p, h2 { white-space: nowrap; }
.ln { fill: none; stroke: #fff; stroke-width: 2; }
.ln1 { fill: none; stroke: #fff; stroke-width: 1.4; }
.ln3 { fill: none; stroke: #fff; stroke-width: 2.800; }
.bk { fill: #000; }
.bkl { fill: none; stroke: #000; stroke-width: 1.600; }
.dim { fill: #a0a0a0; }
.serif { font-family: "Liberation Serif", serif; font-weight: 700; }
.thinserif { font-family: "Liberation Serif", serif; stroke: #000; stroke-width: 1; }
.i24 { width: 24px; height: 24px; }
.i26 { width: 26px; height: 30px; }
.i28 { width: 28px; height: 28px; }
.i30 { width: 30px; height: 30px; }
.i32 { width: 32px; height: 32px; }
.i34 { width: 34px; height: 34px; }
.i36 { width: 36px; height: 36px; }
.inb { width: 28px; height: 24px; }

.menubar { height: 74px; flex: none; display: grid; align-items: center; padding-left: 39px; font-size: 26px; letter-spacing: .1px;
  grid-template-columns: 69px 165px 87px 89px 104px 144px 1071px 64px 128px 64px 69px 75px 80px 300px 85px 92px 20px; }
.menubar > span, .menubar > b { margin-top: -2px; }
.menubar > span { color: #c8c8c8; }
.menubar .apple { width: 30px; height: 30px; margin-top: -4px; }
.lang { width: 44px; height: 32px; border: 2px solid #fff; border-radius: 7px; font-size: 22px; line-height: 29px; text-align: center; }
.recdot { width: 10px; height: 10px; border-radius: 50%; background: #fff; }
.strip { height: 6px; width: 3024px; flex: none; }
.stage { position: relative; height: 1780px; flex: none; }

.browser { position: absolute; left: 1600px; top: 0; width: 1424px; height: 1754px; background: #000; }
.tabs { display: grid; margin: 36px 0 0 242px; height: 32px; align-items: center; font-size: 24px; color: #aaa;
  grid-template-columns: 48px 68px 48px 68px 48px 81px 36px 80px 36px 80px 36px 80px 36px 80px 36px 67px 48px 30px; }
.tabs span { width: 15px; overflow: hidden; }
.tabs span:last-child { width: 20px; }
.play { width: 9px; height: 11px; }
.urlbar { display: grid; margin: 46px 0 0 264px; height: 36px; align-items: center; font-size: 27px; font-weight: 500;
  grid-template-columns: 56px 305px 72px 43px 25px 75px 113px 59px 96px 59px 61px 59px 61px 32px; }
.rule { width: 2px; height: 32px; background: #fff; }
.brave { position: relative; }
.brave sup { position: absolute; left: 25px; top: -4px; font-size: 18px; line-height: 18px; }
.tri { width: 15px; height: 13px; margin-top: 6px; }
.bookmarks { display: grid; margin: 35px 0 0 231px; height: 32px; align-items: center; font-size: 24px; color: #d0d0d0;
  grid-template-columns: 160px 44px 108px 44px 124px 43px 67px 43px 194px 43px 110px; }
.bookmarks svg { width: 29px; height: 24px; }
.cut { width: 125px; overflow: hidden; display: flex; justify-content: flex-end; }
.cut em { font-style: normal; }
.banner { margin-top: 56px; font: 700 28px/49px Roboto, sans-serif; }
.banner p { height: 48px; display: flex; align-items: center; padding-left: 396px; }
.banner p + p { padding-left: 532px; }
.banner svg { width: 28px; height: 28px; margin-right: 19px; }
.banner .arrow { width: 25px; height: 20px; margin-right: 7px; }
.banner u { text-underline-offset: 4px; text-decoration-thickness: 2px; }
.brand { margin-top: 104px; height: 80px; display: flex; align-items: center; justify-content: space-between; padding: 0 145px 0 215px; font: 700 43px/50px Lato, sans-serif; letter-spacing: .7px; }
.brand span { margin-top: -5px; }
.brand svg { width: 80px; height: 80px; }
.doc { margin-top: 73px; width: 1378px; height: 1128px; background: #fff; color: #000; overflow: hidden; font: 400 32px/48px Roboto, sans-serif; }
.tags { display: flex; height: 67px; line-height: 67px; font-size: 28px; letter-spacing: .02px; }
.tags:first-child { margin-top: -39px; }
.tags span { text-align: right; display: flex; justify-content: flex-end; flex: none; }
.t1 { width: 355px; } .t2 { width: 127px; } .t3 { width: 286px; }
.t4 { width: 705px; } .t5 { width: 330px; }
.t6 { width: 233px; } .t7 { width: 246px; } .t8 { width: 211px; }
.doc h2 { font-size: 48px; line-height: 64px; width: 249px; text-align: right; margin: 88px 0 17px; }
.doc p { height: 48px; display: flex; justify-content: flex-end; }
.w1 { width: 1292px; } .w2 { width: 1248px; } .w3 { width: 1295px; } .w4 { width: 1345px; }
.w5 { width: 386px; } .w6 { width: 718px; } .w7 { width: 629px; } .w8 { width: 922px; } .w9 { width: 633px; }
.w10 { width: 238px; } .w11 { width: 1280px; } .w12 { width: 701px; }

.mail { position: absolute; left: 0; top: 0; width: 1817px; height: 1745px; background: #000; border-radius: 0 0 18px 0; display: grid; grid-template-columns: 1742px 75px; }
.topbar { height: 112px; display: grid; align-items: center; padding-left: 322px; font-size: 27.300px;
  grid-template-columns: 100px 128px 126px 795px 46px 159px 36px; }
.topbar h1 { font-size: 30.500px; font-weight: 700; }
.filterbar { height: 88px; display: grid; align-items: center; padding-left: 160px; font-size: 24px;
  grid-template-columns: 441px 505px 71px 100px 127px 240px 28px; }
.filterbar span { margin-top: 2px; }
.filterbar b { font-size: 31.500px; font-weight: 500; margin-top: -1px; }
.drop { width: 15px; height: 9px; }
.cols { display: flex; }
.side { width: 484px; padding-top: 36px; font-size: 27px; letter-spacing: .4px; }
.item { height: 76.300px; display: flex; align-items: center; gap: 18px; padding-left: 68px; }
.item b { font-weight: 700; }
.sec { height: 80px; display: grid; grid-template-columns: 39px auto; align-items: center; padding-left: 75px; margin-bottom: 24px; }
.tw { width: 9px; height: 15px; margin-left: 3px; }
.finish { height: 74px; margin: 60px 0 0; }
.task { height: 100px; display: flex; align-items: center; gap: 16px; padding-left: 56px; font-size: 23.500px; font-weight: 500; letter-spacing: .1px; margin-top: -.500px; }
.thin { font-weight: 400; color: #bbb; }
.task svg { width: 56px; height: 48px; }
.fade { width: 226px; overflow: hidden; }
.meter { margin: 198px 0 0 40px; width: 154px; height: 8px; border-radius: 4px; background: #fff; }
.quota { margin: 27px 0 0 40px; width: 326px; display: flex; justify-content: space-between; font-size: 19.500px; letter-spacing: .2px; color: #ccc; }
.quota b { color: #fff; }
.list { width: 1258px; font-size: 24px; color: #b0b0b0; }
.row { height: 122px; padding: 29px 74px 0 66px; display: flex; flex-wrap: wrap; align-content: flex-start; line-height: 30px; }
.tall { height: 186px; }
.row time { margin-left: auto; }
.row .clip { width: 27px; height: 29px; margin: 10px 3px 0 1088px; fill: none; stroke: #fff; stroke-width: 1.700; }
.row.bold { font-weight: 700; color: #fff; }
.bold .clip { stroke-width: 2.400; }
.avatar { width: 56px; height: 26px; margin-top: -5px; }
.from { font-size: 28px; margin-left: 24px; letter-spacing: .05px; }
.rail { display: flex; flex-direction: column; padding: 0 0 53px 8px; }
.rail span { height: 112px; line-height: 112px; font-size: 24px; margin: 0 0 -34px 2px; color: #bbb; }
.rail svg { width: 40px; height: 36px; margin-top: 76px; }
.rail .more { width: 20px; height: 20px; margin: auto 0 0 10px; }

.voice { position: absolute; left: 480px; top: 264px; width: 1152px; height: 1490px; background: #000; border-radius: 0 0 20px 20px; display: flex; flex-direction: column; }
.vtop { display: flex; justify-content: flex-end; gap: 51px; padding: 42px 42px 0 0; align-items: center; height: 74px; }
.blobs { display: flex; align-items: center; gap: 1.500px; margin: 592px 0 0 399px; height: 80px; }
.blobs i { width: 59px; background: #fff; border-radius: 28px; }
.b1 { height: 66px; } .b2 { height: 73px; } .b3 { height: 80px; }
.voice p { margin: 489px 0 0 417px; font-size: 25px; font-weight: 500; line-height: 36px; letter-spacing: .2px; }
.controls { display: grid; grid-template-columns: 110px 116px 24px; align-items: center; margin: 96px 0 0 394px; height: 40px; }
.mic { width: 26px; height: 32px; }
.close { width: 22px; height: 22px; }
.specks { position: absolute; left: 0; top: 0; width: 480px; height: 1000px; }

.dock { position: relative; height: 104px; display: flex; padding: 10px 0 0 80px; gap: 58.500px; }
.group { display: flex; gap: 20.600px; }
.group span { width: 62px; height: 62px; position: relative; }
.group svg { width: 62px; height: 62px; }
.on::after { content: ""; position: absolute; left: 26px; bottom: -18px; width: 8px; height: 8px; border-radius: 50%; background: #fff; }
.group .tv { display: flex; align-items: center; justify-content: center; font-size: 29px; font-weight: 600; gap: 1px; }
.group .tv svg { width: 22px; height: 22px; }
.group .up svg { height: 70px; margin-top: -7px; }
.edge { position: absolute; left: 10px; top: 16px; width: 20px; height: 30px; }
.foot { position: absolute; left: 0; bottom: 0; width: 3024px; height: 8px; }
```
